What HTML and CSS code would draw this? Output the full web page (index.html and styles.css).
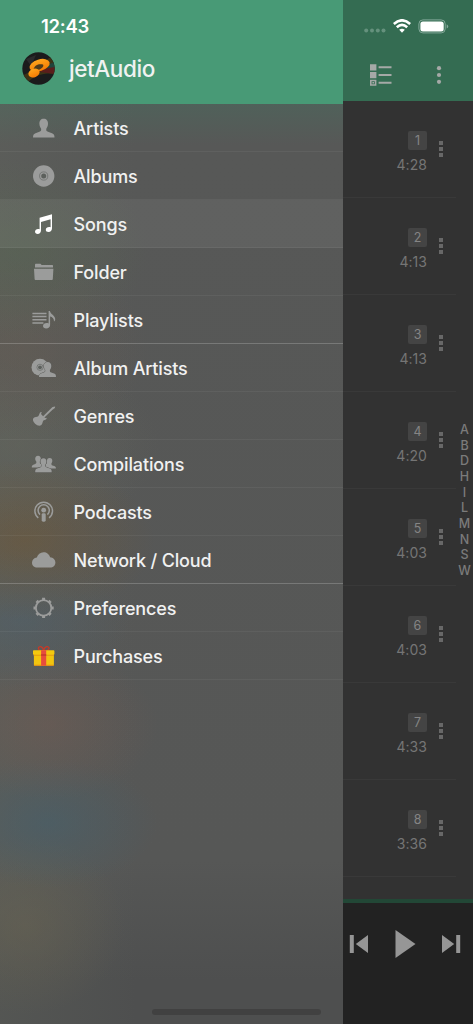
FILE: index.html
```
<!DOCTYPE html>
<html lang="en">
<head>
<meta charset="utf-8">
<title>jetAudio</title>
<link rel="stylesheet" href="styles.css">
</head>
<body>
<div class="screen">
  <aside class="drawer">
    <header class="drawer-header">
      <time class="clock">12:43</time>
      <div class="brand">
        <svg class="logo" viewBox="0 0 33 33">
          <defs>
            <linearGradient id="gold" x1="0" y1="0" x2="0" y2="1"><stop offset="0" stop-color="#ffa51c"/><stop offset="1" stop-color="#f47b04"/></linearGradient>
            <clipPath id="disc"><circle cx="16.5" cy="16.5" r="16"/></clipPath>
          </defs>
          <circle cx="16.5" cy="16.5" r="16.2" fill="#1b1b1c"/>
          <g clip-path="url(#disc)">
            <path d="M0 24C11 19 23 7 33 3V22C22 20 12 23 4 32z" fill="#3c3316"/>
            <path d="M25 13L33 10V20H24z" fill="#21443b"/>
            <path d="M20 17L33 15V22L18 20z" fill="#5b1d1b"/>
            <path d="M4 7L14 3L9 14z" fill="#2b2b2c"/>
          </g>
          <ellipse cx="17.6" cy="13.2" rx="10.4" ry="5.8" transform="rotate(-17 17.6 13.2)" fill="url(#gold)"/>
          <path d="M11.5 17.2C12.5 13.2 17 11.2 21 12.6C22.5 14.6 19 17.6 15.5 18z" fill="#4f3c1c"/>
          <ellipse cx="12" cy="21" rx="5.8" ry="4.3" transform="rotate(-22 12 21)" fill="url(#gold)"/>
        </svg>
        <h1 class="brand-name">jetAudio</h1>
      </div>
    </header>
    <nav class="menu">
      <a class="item"><svg class="icon" viewBox="0 0 26 26"><path d="M12.7 3.8C15.5 3.8 17.2 5.8 17 9C16.9 11.3 16 12.7 15.3 13.7C15 15.5 15.5 16.2 17 16.8L21 18.2C23 19 23.5 20 23.5 22.6H2C2 20 2.5 19 4.5 18.2L8.4 16.8C9.9 16.2 10.4 15.5 10.1 13.7C9.4 12.7 8.5 11.3 8.4 9C8.2 5.8 9.9 3.8 12.7 3.8z"/></svg>Artists</a>
      <a class="item"><svg class="icon" viewBox="0 0 26 26"><circle cx="12.7" cy="13" r="10.7"/><circle cx="12.7" cy="13" r="4.1" class="cut-line"/><circle cx="12.7" cy="13" r="2.5" class="cut"/></svg>Albums</a>
      <a class="item item-active"><svg class="icon" viewBox="0 0 26 26"><path d="M8.6 6.8L21 3.2V17.2C21 19.6 19.5 21 17.6 21C15.8 21 14.8 20 14.8 18.7C14.8 16.8 17 15.5 19.6 16.2V8.2L10 10.9V19.2C10 21.5 8.5 23 6.7 23C5 23 4 22 4 20.8C4 18.7 6 17.5 8.6 18.2z"/></svg>Songs</a>
      <a class="item"><svg class="icon" viewBox="0 0 26 26"><path d="M4 8.5V6C4 5.2 4.4 4.8 5.1 4.8H9.5L10.6 6H21C21.8 6 22 6.3 22 7V8.5zM3 9.7H22.4L21.8 20C21.7 20.8 21.4 21.1 20.7 21.1H4.8C4.1 21.1 3.7 20.8 3.6 20z"/></svg>Folder</a>
      <a class="item"><svg class="icon" viewBox="0 0 26 26"><path d="M1.4 5.7H15.5V7.2H1.4zM1.4 8.8H15.5V10.3H1.4zM1.4 12H15.5V13.5H1.4zM1.4 15.2H12.4V16.7H1.4z"/><path d="M17.6 4H18.9C19.3 7.2 24.2 8.2 24.2 12.1C24.2 13.2 23.8 14.2 23 14.6C23.3 11.8 21.4 10 19.1 9.5V18C19.1 20.1 17.4 21.4 15.2 21.4C13.3 21.4 12 20.4 12 19C12 16.9 14.8 15.5 17.6 16.4z"/></svg>Playlists</a>
      <a class="item item-group"><svg class="icon" viewBox="0 0 26 26"><circle cx="9" cy="12.3" r="8.5"/><circle cx="9" cy="12.3" r="3.1" class="cut-line"/><circle cx="9" cy="12.3" r="1.9" class="cut"/><path class="outlined" d="M16.6 7.1C19 7.1 20.5 8.8 20.3 11.2C20.2 13 19.5 14.1 18.9 14.9C18.7 16.4 19.1 17 20.3 17.5L23.1 18.6C24.8 19.3 25 20 25 22H8C8 20 8.3 19.3 10 18.6L12.9 17.5C14.1 17 14.5 16.4 14.3 14.9C13.7 14.1 13 13 12.9 11.2C12.7 8.8 14.2 7.1 16.6 7.1z"/></svg>Album Artists</a>
      <a class="item"><svg class="icon" viewBox="0 0 26 26"><path d="M12.1 13.2L20.2 5.2L21.5 3.9L24.1 3.5L23.9 5.1L21.5 6.7L13.4 14.6L14.4 15.1L15.3 14.7L15.7 15.7C14.7 17.3 12.9 16.7 12.2 17.8C11.5 19 11.7 20.7 10.3 22C8.8 23.2 6.3 22.8 4.1 20.7C1.8 18.5 1.4 16 2.6 14.9C4 13.6 6 14.1 7.2 13.2C8.5 12.2 7.9 9.9 9.8 8.9L10.8 9.3L10 11z"/></svg>Genres</a>
      <a class="item"><svg class="icon" viewBox="0 0 26 26"><path d="M7 4.7C8.9 4.7 9.9 6.1 9.8 8C9.7 9.3 9.2 10 8.8 10.6C8.7 12.2 9 12.6 10 13L13 14.5V16.5H.8C.8 14.9 1.1 14.2 2.4 13.7L4.2 13C5.2 12.6 5.5 12.2 5.3 10.6C4.8 10 4.3 9.3 4.2 8C4.1 6.1 5.1 4.7 7 4.7z"/><path d="M18.7 7C20.5 7 21.4 8.2 21.3 10C21.2 11.2 20.8 11.8 20.4 12.4C20.3 13.6 20.6 14 21.5 14.4L23.2 15.1C24.6 15.6 24.9 16.3 24.9 17.5H15V13C16.1 12.2 16 11.2 16 10C15.9 8.2 16.9 7 18.7 7z"/><path class="outlined" d="M12.5 7.2C14.5 7.2 15.6 8.7 15.4 10.7C15.3 12.2 14.8 13 14.3 13.7C14.2 15.5 14.6 16 15.6 16.4L18.8 17.6C20.4 18.2 20.7 19.1 20.7 21.2H4.2C4.2 19.1 4.5 18.2 6.1 17.6L9.3 16.4C10.4 16 10.7 15.5 10.6 13.7C10.1 13 9.6 12.2 9.5 10.7C9.3 8.7 10.5 7.2 12.5 7.2z"/></svg>Compilations</a>
      <a class="item"><svg class="icon" viewBox="0 0 26 26"><circle cx="12.7" cy="11.2" r="2.4"/><rect x="10.7" y="14.2" width="4" height="8.5" rx="1.4"/><path class="line" d="M7.3 18.9A8.8 8.8 0 1 1 18.1 18.9M9 15.6A5.6 5.6 0 1 1 16.4 15.6"/></svg>Podcasts</a>
      <a class="item"><svg class="icon" viewBox="0 0 26 26"><path d="M6.3 20.6C3.2 20.6 1 18.5 1 15.8C1 13.2 3 11 5.8 10.6C6.7 7.3 9.3 5.2 12.5 5.2C15.8 5.2 18.4 7.3 19.1 10.3C22.2 10.5 24.4 12.7 24.4 15.5C24.4 18.4 22.1 20.6 19.2 20.6z"/></svg>Network / Cloud</a>
      <a class="item item-group"><svg class="icon" viewBox="0 0 26 26"><circle class="gear" cx="12.6" cy="12.9" r="7.7"/><path class="teeth" d="M12.6 5.2V2.8M12.6 20.6V23M4.9 12.9H2.5M20.3 12.9H22.7M7.1 7.4L5.6 5.9M18.1 7.4L19.6 5.9M7.1 18.4L5.6 19.9M18.1 18.4L19.6 19.9"/></svg>Preferences</a>
      <a class="item"><svg class="icon" viewBox="0 0 26 26"><path d="M12.7 7.5C10.7 8 7.4 7.5 7.4 5.5C7.4 2.7 11.6 2.8 12.7 7.5C13.8 2.8 18 2.7 18 5.5C18 7.5 14.7 8 12.7 7.5z" fill="none" stroke="#c63a28" stroke-width="1.3"/><rect x="2.9" y="10" width="20" height="12.7" rx="1" fill="#f1c40f"/><rect x="2" y="7.2" width="21.4" height="4.6" rx=".8" fill="#f3c80f"/><path d="M2.4 11.7H23V12.7H2.9z" fill="#e59a12"/><rect x="2.9" y="21.8" width="20" height="1" rx=".5" fill="#e58e12"/><rect x="10.1" y="7.2" width="5.1" height="15.5" fill="#e74c3c"/><rect x="10.1" y="11.3" width="5.1" height="1.4" fill="#c0392b"/></svg>Purchases</a>
    </nav>
    <div class="home-indicator"></div>
  </aside>
  <main class="songs">
    <header class="toolbar">
      <div class="status">
        <svg class="signal" viewBox="0 0 22 5"><circle cx="2.2" cy="2.5" r="2"/><circle cx="8" cy="2.5" r="2"/><circle cx="13.8" cy="2.5" r="2"/><circle cx="19.5" cy="2.5" r="2"/></svg>
        <svg class="wifi" viewBox="0 0 18 14"><path d="M.8 5Q9-2.4 17.2 5M3.8 8.2Q9 3.7 14.2 8.2" fill="none" stroke="#fff" stroke-width="2.6"/><path d="M6.2 10.8Q9 8.6 11.8 10.8L9 13.7z" fill="#fff"/></svg>
        <svg class="battery" viewBox="0 0 31 15"><rect x=".9" y=".9" width="26.3" height="13" rx="4" fill="none" stroke="#83a899"/><rect x="2.4" y="2.5" width="23.3" height="9.9" rx="2.5" fill="#fff"/><path d="M28.7 5.2Q30.2 6 30.2 7.4T28.7 9.6z" fill="#83a899"/></svg>
      </div>
      <div class="actions">
        <svg class="view" viewBox="0 0 22 22"><path d="M0 .3H6.4V6.5H0zM0 8H6.4V14.2H0zM8.6 2.2H21.5V4.2H8.6zM8.6 10H21.5V12H8.6zM8.6 17.8H21.5V19.8H8.6z"/><path fill-rule="evenodd" d="M0 15.7H6.4V21.8H0zM1.6 17.3V20.2H4.8V17.3z"/><path d="M2.4 18H4V19.5H2.4z"/></svg>
        <svg class="more" viewBox="0 0 6 20"><circle cx="3" cy="3.2" r="2.1"/><circle cx="3" cy="10" r="2.1"/><circle cx="3" cy="16.8" r="2.1"/></svg>
      </div>
    </header>
    <section class="list">
      <div class="tracks">
        <div class="track"><div class="meta"><b class="number">1</b><span>4:28</span></div><i class="dots"></i></div>
        <div class="track"><div class="meta"><b class="number">2</b><span>4:13</span></div><i class="dots"></i></div>
        <div class="track"><div class="meta"><b class="number">3</b><span>4:13</span></div><i class="dots"></i></div>
        <div class="track"><div class="meta"><b class="number">4</b><span>4:20</span></div><i class="dots"></i></div>
        <div class="track"><div class="meta"><b class="number">5</b><span>4:03</span></div><i class="dots"></i></div>
        <div class="track"><div class="meta"><b class="number">6</b><span>4:03</span></div><i class="dots"></i></div>
        <div class="track"><div class="meta"><b class="number">7</b><span>4:33</span></div><i class="dots"></i></div>
        <div class="track"><div class="meta"><b class="number">8</b><span>3:36</span></div><i class="dots"></i></div>
      </div>
      <div class="letters"><span>A</span><span>B</span><span>D</span><span>H</span><span>I</span><span>L</span><span>M</span><span>N</span><span>S</span><span>W</span></div>
    </section>
    <footer class="player">
      <svg class="skip" viewBox="0 0 20 20"><path d="M.8 1H4.8V19H.8zM19 1V19L6.8 10z"/></svg>
      <svg class="play" viewBox="0 0 21 30"><path d="M.5 1L20.5 15L.5 29z"/></svg>
      <svg class="skip" viewBox="0 0 20 20"><path d="M15.2 1H19.2V19H15.2zM1 1V19L13.2 10z"/></svg>
    </footer>
  </main>
</div>
</body>
</html>
```
FILE: styles.css
```
* { box-sizing: border-box; }
body { margin: 0; font-family: Inter, "Liberation Sans", sans-serif; }
svg { display: block; flex: none; }

.screen {
  display: grid;
  grid-template-columns: 343px 130px;
  height: 1024px;
  overflow: hidden;
  background: #323232;
}

.drawer {
  display: flex;
  flex-direction: column;
  background:
    radial-gradient(130px 80px at 25px 540px, rgba(123, 87, 38, .36), transparent),
    radial-gradient(110px 70px at 20px 620px, rgba(75, 99, 116, .38), transparent),
    radial-gradient(110px 75px at 48px 725px, rgba(123, 91, 79, .36), transparent),
    radial-gradient(110px 65px at 48px 823px, rgba(67, 96, 110, .52), transparent),
    radial-gradient(100px 90px at 25px 925px, rgba(108, 101, 80, .45), transparent),
    radial-gradient(130px 90px at 20px 250px, rgba(88, 105, 80, .4), transparent),
    radial-gradient(130px 90px at 20px 350px, rgba(104, 91, 81, .42), transparent),
    radial-gradient(140px 90px at 20px 445px, rgba(103, 106, 94, .4), transparent),
    linear-gradient(90deg, rgba(105, 110, 98, .22), transparent 40%),
    linear-gradient(#50615a 104px, #575857 145px, #565756 860px, #4e4f4f 980px);
}
.drawer-header {
  height: 104px;
  padding: 16px 0 0 22px;
  background: #489a76;
}
.clock {
  display: block;
  margin-left: 19px;
  color: #fff;
  font-size: 18.5px;
  font-weight: 600;
  line-height: 20px;
  letter-spacing: -.25px;
}
.brand { display: flex; align-items: center; gap: 14px; margin-top: 16px; }
.logo { width: 33px; height: 33px; }
.brand-name {
  margin: 0;
  color: #f0f2f1;
  font-size: 22.5px;
  font-weight: 550;
  line-height: 32px;
  letter-spacing: -.42px;
}

.item {
  display: flex;
  align-items: center;
  gap: 16.5px;
  height: 48px;
  padding: 1px 0 0 31px;
  border-bottom: 1px solid rgba(255, 255, 255, .05);
  color: #f1f1f1;
  font-size: 18px;
  font-weight: 500;
  letter-spacing: -.15px;
}
.item:has(+ .item-group) { border-bottom-color: rgba(255, 255, 255, .2); }
.item-active { background: rgba(255, 255, 255, .06); }
.icon { width: 26px; height: 26px; fill: #9b9c9b; }
.item-active .icon { fill: #fff; }
.cut { fill: #5c605c; }
.cut-line { fill: none; stroke: #6d706d; stroke-width: .8; }
.outlined { stroke: #5b5b58; stroke-width: 1; paint-order: stroke; }
.line { fill: none; stroke: #9b9c9b; stroke-width: 1.5; }
.gear { fill: none; stroke: #9b9c9b; stroke-width: 1.8; }
.teeth { fill: none; stroke: #9b9c9b; stroke-width: 3; }

.home-indicator {
  width: 169px;
  height: 6px;
  margin: auto 0 9px 152px;
  border-radius: 3px;
  background: #414141;
}

.songs { display: flex; flex-direction: column; }
.toolbar { height: 101px; background: #346c52; padding: 18px 0 0 21px; }
.status { display: flex; height: 16px; align-items: center; }
.signal { width: 22px; height: 5px; margin-top: 9px; fill: #65917d; }
.wifi { width: 18px; height: 14px; margin-left: 7px; }
.battery { width: 31px; height: 15px; margin-left: 7px; }
.actions { display: flex; align-items: center; gap: 43.5px; padding: 30px 0 0 6.3px; fill: #a5a9a7; }
.view { width: 22px; height: 22px; }
.more { width: 6px; height: 20px; }

.list { display: flex; height: 798px; }
.tracks { width: 113px; }
.track {
  display: flex;
  height: 97px;
  padding: 30px 0 0 24px;
  border-bottom: 1px solid #393939;
}
.meta {
  display: flex;
  flex-direction: column;
  align-items: flex-end;
  width: 60px;
  color: #757575;
  font-size: 14px;
  line-height: 18px;
}
.meta span { margin-top: 6px; letter-spacing: .05px; }
.number {
  width: 19px;
  height: 19px;
  border-radius: 2px;
  background: #444;
  color: #858585;
  font-size: 12.5px;
  font-weight: 400;
  line-height: 19px;
  text-align: center;
}
.dots {
  width: 4px;
  height: 16px;
  margin: 10px 0 0 12.4px;
  background: linear-gradient(#686868 4px, transparent 4px 6px, #686868 6px 10px, transparent 10px 12px, #686868 12px);
}
.letters {
  display: flex;
  flex-direction: column;
  width: 17px;
  padding-top: 321px;
  color: #7b7b7b;
  font-size: 12.5px;
  font-weight: 500;
  line-height: 15.65px;
  text-align: center;
}

.player {
  display: flex;
  flex: 1;
  align-items: flex-start;
  border-top: 4px solid #224736;
  background: #222;
  padding-left: 6px;
  fill: #969696;
}
.skip { width: 20px; height: 20px; margin-top: 31px; }
.play { width: 21px; height: 30px; margin: 26px 25px 0 26px; }
```
